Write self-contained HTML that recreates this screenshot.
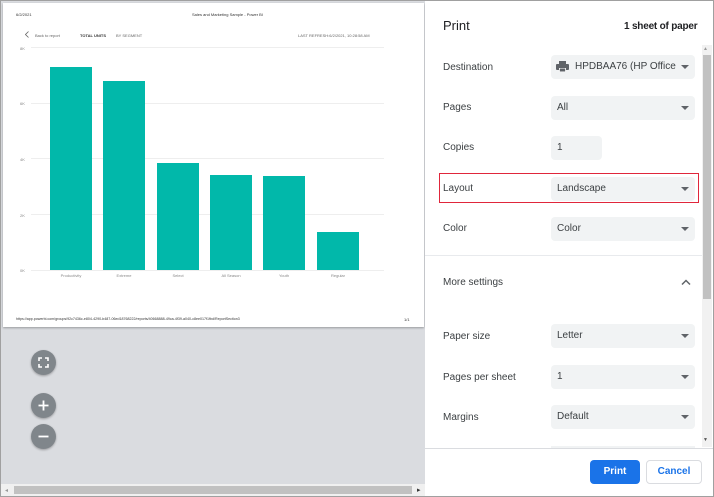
<!DOCTYPE html>
<html><head><style>
*{margin:0;padding:0;box-sizing:border-box}
body{width:714px;height:497px;position:relative;overflow:hidden;font-family:"Liberation Sans",sans-serif;background:#fff}
.abs{position:absolute}
#left{left:1px;top:1px;width:424px;height:495px;background:#dadce0}
#page{left:2px;top:2px;width:421px;height:324px;background:#fff;box-shadow:0 1px 2px rgba(0,0,0,.3)}
.t{position:absolute;font-size:4px;color:#333;white-space:nowrap}
.g{position:absolute;left:28px;width:353px;height:1px;background:#eee}
.bar{position:absolute;background:#01b8aa;bottom:57px;width:42px}
.xl{position:absolute;top:270px;font-size:4px;color:#888;width:42px;text-align:center}
.fab{position:absolute;left:30px;width:25px;height:25px;border-radius:50%;background:#80868b;color:#fff;box-shadow:0 1px 2px rgba(0,0,0,.3)}
#right{left:425px;top:1px;width:288px;height:495px;background:#fff}
.lab{position:absolute;left:18px;font-size:10px;color:#3c4043}
.sel{position:absolute;left:126px;width:144px;height:24px;background:#f1f3f4;border-radius:4px;font-size:10px;color:#3c4043;padding:6px 0 0 6px}
.sel.dd:after{content:"";position:absolute;right:6px;top:10px;border:4px solid transparent;border-top:4px solid #5f6368;border-bottom:0}
</style></head><body>
<div class="abs" style="left:0;top:0;width:714px;height:497px;border:1px solid #a0a0a0;z-index:5;pointer-events:none"></div>
<div id="left" class="abs">
<div id="page" class="abs">
 <div class="t" style="left:13px;top:9px">6/2/2021</div>
 <div class="t" style="left:189px;top:9px">Sales and Marketing Sample - Power BI</div>
 <svg class="abs" style="left:22px;top:28px" width="4" height="7" viewBox="0 0 4 7" fill="none" stroke="#666" stroke-width=".8"><path d="M3.5 .5L.5 3.5l3 3"/></svg>
 <div class="t" style="left:32px;top:30px;color:#666">Back to report</div>
 <div class="t" style="left:77px;top:30px;font-weight:bold">TOTAL UNITS</div>
 <div class="t" style="left:113px;top:30px;color:#666">BY SEGMENT</div>
 <div class="t" style="left:295px;top:30px;color:#666">LAST REFRESH:6/2/2021, 10:28:58 AM</div>
 <div class="t" style="left:17px;top:43px;color:#888">8K</div>
 <div class="t" style="left:17px;top:98px;color:#888">6K</div>
 <div class="t" style="left:17px;top:154px;color:#888">4K</div>
 <div class="t" style="left:17px;top:210px;color:#888">2K</div>
 <div class="t" style="left:17px;top:265px;color:#888">0K</div>
 <div class="g" style="top:44px"></div><div class="g" style="top:100px"></div><div class="g" style="top:155px"></div><div class="g" style="top:211px"></div><div class="g" style="top:267px"></div>
 <div class="bar" style="left:47px;height:203px"></div>
 <div class="bar" style="left:100px;height:189px"></div>
 <div class="bar" style="left:154px;height:107px"></div>
 <div class="bar" style="left:207px;height:95px"></div>
 <div class="bar" style="left:260px;height:94px"></div>
 <div class="bar" style="left:314px;height:38px"></div>
 <div class="xl" style="left:47px">Productivity</div>
 <div class="xl" style="left:100px">Extreme</div>
 <div class="xl" style="left:154px">Select</div>
 <div class="xl" style="left:207px">All Season</div>
 <div class="xl" style="left:260px">Youth</div>
 <div class="xl" style="left:314px">Regular</div>
 <div class="t" style="left:13px;top:314px;font-size:3.6px">https://app.powerbi.com/groups/92c7436c-e804-4290-b487-06ed18768222/reports/40668888-49ca-4f39-a040-c8ee017f1fbd/ReportSection3</div>
 <div class="t" style="left:401px;top:314px">1/1</div>
</div>
<div class="fab" style="top:349px"><svg width="25" height="25" viewBox="0 0 25 25" fill="none" stroke="#fff" stroke-width="1.6"><path d="M8 11V8h3M14 8h3v3M17 14v3h-3M11 17H8v-3"/></svg></div>
<div class="fab" style="top:392px"><svg width="25" height="25" viewBox="0 0 25 25" stroke="#fff" stroke-width="1.8"><path d="M12.5 7.5v10M7.5 12.5h10"/></svg></div>
<div class="fab" style="top:423px"><svg width="25" height="25" viewBox="0 0 25 25" stroke="#fff" stroke-width="1.8"><path d="M7.5 12.5h10"/></svg></div>
<div class="abs" style="left:0;top:483px;width:424px;height:12px;background:#f0f0f0"></div>
<div class="abs" style="left:13px;top:485px;width:398px;height:8px;background:#c1c1c1"></div>
<div class="abs" style="left:4px;top:486px;font-size:6px;color:#999">◂</div>
<div class="abs" style="left:416px;top:485px;font-size:7px;color:#333">▸</div>
</div>
<div id="right" class="abs">
 <div class="abs" style="left:18px;top:17px;font-size:13px;color:#202124">Print</div>
 <div class="abs" style="left:199px;top:20px;font-size:10px;color:#202124;font-weight:bold;letter-spacing:-.2px">1 sheet of paper</div>
 <div class="abs" style="left:277px;top:44px;width:10px;height:402px;background:#f1f1f1"></div>
 <div class="abs" style="left:278px;top:54px;width:8px;height:244px;background:#c1c1c1"></div>
 <div class="abs" style="left:278px;top:45px;font-size:5px;color:#999">▲</div>
 <div class="abs" style="left:278px;top:436px;font-size:5px;color:#555">▼</div>
 <div class="lab" style="top:61px">Destination</div>
 <div class="sel dd" style="top:54px;padding-left:24px">HPDBAA76 (HP Office<svg style="position:absolute;left:5px;top:6px" width="13" height="12" viewBox="0 0 13 12" fill="#5f6368"><rect x="3" y="0" width="7" height="3"/><rect x="0" y="3" width="13" height="6" rx="1"/><rect x="3" y="7" width="7" height="4" fill="#fff"/><rect x="3.8" y="7.5" width="5.4" height="3"/></svg></div>
 <div class="lab" style="top:101px">Pages</div>
 <div class="sel dd" style="top:95px">All</div>
 <div class="lab" style="top:141px">Copies</div>
 <div class="sel" style="top:135px;width:51px">1</div>
 <div class="abs" style="left:14px;top:172px;width:260px;height:30px;border:1.5px solid #e0263b"></div>
 <div class="lab" style="top:182px">Layout</div>
 <div class="sel dd" style="top:176px">Landscape</div>
 <div class="lab" style="top:222px">Color</div>
 <div class="sel dd" style="top:216px">Color</div>
 <div class="abs" style="left:0;top:254px;width:277px;height:1px;background:#e8eaed"></div>
 <div class="lab" style="top:276px">More settings</div>
 <svg class="abs" style="left:256px;top:278px" width="10" height="7" viewBox="0 0 10 7" fill="none" stroke="#5f6368" stroke-width="1.5"><path d="M1 5.5l4-4 4 4"/></svg>
 <div class="lab" style="top:330px">Paper size</div>
 <div class="sel dd" style="top:323px">Letter</div>
 <div class="lab" style="top:371px">Pages per sheet</div>
 <div class="sel dd" style="top:364px">1</div>
 <div class="lab" style="top:411px">Margins</div>
 <div class="sel dd" style="top:404px">Default</div>
 <div class="abs" style="left:126px;top:445px;width:144px;height:2px;background:#f1f3f4"></div>
 <div class="abs" style="left:0;top:447px;width:288px;height:1px;background:#dadce0"></div>
 <div class="abs" style="left:165px;top:459px;width:50px;height:24px;background:#1a73e8;border-radius:4px;color:#fff;font-size:10px;font-weight:bold;text-align:center;line-height:24px">Print</div>
 <div class="abs" style="left:221px;top:459px;width:56px;height:24px;border:1px solid #dadce0;border-radius:4px;color:#1a73e8;font-size:10px;font-weight:bold;text-align:center;line-height:22px">Cancel</div>
</div>
</body></html>
